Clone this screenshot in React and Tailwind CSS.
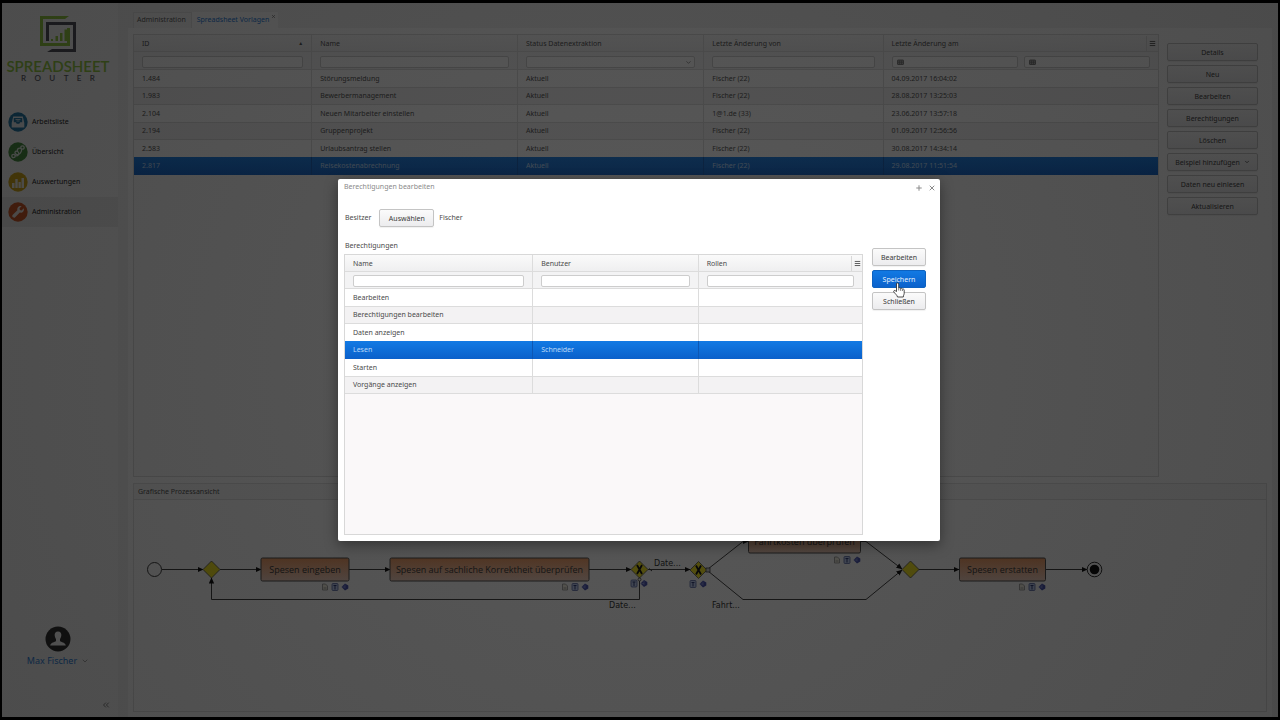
import { ChevronDown, ChevronsLeft, Menu, Plus, X } from "lucide-react";

const TEMPLATES = [
  ["1.484", "Störungsmeldung", "Aktuell", "Fischer (22)", "04.09.2017 16:04:02"],
  ["1.983", "Bewerbermanagement", "Aktuell", "Fischer (22)", "28.08.2017 13:25:03"],
  ["2.104", "Neuen Mitarbeiter einstellen", "Aktuell", "1@1.de (33)", "23.06.2017 13:57:18"],
  ["2.194", "Gruppenprojekt", "Aktuell", "Fischer (22)", "01.09.2017 12:56:56"],
  ["2.583", "Urlaubsantrag stellen", "Aktuell", "Fischer (22)", "30.08.2017 14:34:14"],
  ["2.817", "Reisekostenabrechnung", "Aktuell", "Fischer (22)", "29.08.2017 11:51:54"],
];

const PERMISSIONS = [
  ["Bearbeiten", "", ""],
  ["Berechtigungen bearbeiten", "", ""],
  ["Daten anzeigen", "", ""],
  ["Lesen", "Schneider", ""],
  ["Starten", "", ""],
  ["Vorgänge anzeigen", "", ""],
];

const ACTIONS = ["Details", "Neu", "Bearbeiten", "Berechtigungen", "Löschen", "Beispiel hinzufügen", "Daten neu einlesen", "Aktualisieren"];

const FIELD = "block h-[12px] w-full min-w-0 rounded-[2px] border border-[#cdcdcd] bg-white px-1 text-[7px]";
const BUTTON = "flex h-[18px] w-full items-center justify-center gap-1 rounded-[2px] border border-[#c4c4c4] bg-linear-to-b from-[#fbfbfb] to-[#ececee] text-[7px] leading-none text-[#3a3a3a] shadow-[0_1px_1px_rgba(0,0,0,0.06)]";
const HEAD = "border-b border-[#dcdcdc] bg-linear-to-b from-[#fafafa] to-[#efeff0] px-2 pt-px pb-0 text-left font-normal";
const FILTER = "border-b border-[#dcdcdc] bg-[#f3f3f4] px-2 pt-[2px] pb-0 font-normal";
const ROW_EVEN = "h-[18px] bg-[#f3f2f3]";
const ROW_ODD = "h-[17px] bg-white";
const ROW_SELECTED = "bg-linear-to-b from-[#127ae4] to-[#0b60ca] text-[#bcd9f8]";

function Row({ cells, index, selected }) {
  const size = index % 2 ? ROW_EVEN : ROW_ODD;
  const line = index % 2 && !selected ? "border-y border-y-[#dcdcdc]" : "";
  return (
    <tr aria-selected={selected} className={selected ? `${index % 2 ? "h-[18px]" : "h-[17px]"} ${ROW_SELECTED}` : size}>
      {cells.map((cell, i) => (
        <td key={i} className={`truncate px-2 py-0 ${line} ${i < cells.length - 1 ? (selected ? "border-r border-r-[#0d57b4]" : "border-r border-r-[#dcdcdc]") : ""}`}>
          {cell}
        </td>
      ))}
    </tr>
  );
}

function Logo() {
  return (
    <div className="flex flex-col items-center pt-[12px] pr-[4px]">
      <svg viewBox="0 0 38 38" className="size-[38px]" aria-label="Spreadsheet Router" role="img">
        <path fill="#8fc93a" d="M1 1h29l-4 3H4v24h24V13h3v18H1z" />
        <path fill="#4a4a55" d="M7 7h30v30H8l5-3h21V10H10v16H7z" />
        <path fill="#8fc93a" d="M12 24h2v2h-2zM16.500 21h2.500v5h-2.500zM21 18h2.500v8H21zM25.500 14.500H28V26h-2.500z" />
      </svg>
      <div className="mt-[5px] font-[Lato,sans-serif] text-[15px] leading-[16px] font-semibold text-[#8fc93a]">SPREADSHEET</div>
      <div className="flex w-[74px] justify-between font-[Lato,sans-serif] text-[8px] leading-[8px] font-semibold text-[#55555f]">
        {[..."ROUTER"].map((letter, i) => <span key={i}>{letter}</span>)}
      </div>
    </div>
  );
}

const NAV = [
  {
    label: "Arbeitsliste", color: "#1a73a3",
    icon: <><path d="M5.200 4.500h9.600l1.500 6.500v4.500H3.700V11z" fill="#e8eef2" /><path d="M5.800 6h8.400v4.300h-2l-.900 1.500H8.700l-.900-1.500h-2z" fill="#1a73a3" /><path d="M7.500 7.500h5M8.500 9h3" stroke="#e8eef2" strokeWidth="0.800" /></>,
  },
  {
    label: "Übersicht", color: "#3f8a38",
    icon: <g fill="none" stroke="#e6efe6" strokeWidth="1.300"><circle cx="5.500" cy="14" r="1.700" /><circle cx="14.500" cy="5.500" r="1.700" /><path d="M7 13.500c3 1 4.500-1 3.500-3s-4-1.500-3.500.500 4 2 5 .500 2-2 1.500-4.500M13 6.500C10.500 5.500 9 7 9.500 9" /></g>,
  },
  {
    label: "Auswertungen", color: "#d0a40e",
    icon: <path fill="#f2f0e6" d="M4 11h2.500v5H4zM7.300 7h2.400v9H7.300zM10.500 10h2.300v6h-2.300zM13.500 6H16v10h-2.500z" />,
  },
  {
    label: "Administration", color: "#cc4f1c", active: true,
    icon: <path fill="#f2ebe6" d="M15.800 6.200 13.600 8.400l-1.700-.400-.400-1.700 2.200-2.200c-2.800-.700-5 1.600-4.300 4.100l-4.600 4.600c-1.600 1.600.800 4 2.400 2.400l4.600-4.600c2.500.700 4.800-1.600 4-4.400z" />,
  },
];

function Sidebar() {
  return (
    <aside className="flex w-[116px] shrink-0 flex-col bg-[#f8f8f8]">
      <Logo />
      <nav className="mt-[25px] flex flex-col">
        {NAV.map(({ label, color, icon, active }) => (
          <a key={label} href={`#${label}`} aria-current={active ? "page" : undefined} className={`flex h-[30px] items-center gap-[4px] pl-[6px] text-[7px] text-[#111] ${active ? "bg-[#e9e9e9]" : ""}`}>
            <svg viewBox="0 0 20 20" className="size-[20px]" aria-hidden="true">
              <circle cx="10" cy="10" r="9.700" fill={color} />
              {icon}
            </svg>
            {label}
          </a>
        ))}
      </nav>
      <div className="mt-auto flex flex-col items-center pr-[4px] pb-[7px]">
        <svg viewBox="0 0 26 26" className="size-[26px]" aria-hidden="true">
          <circle cx="13" cy="13" r="12.500" fill="#262626" />
          <path fill="#fff" d="M13 5.500c2.500 0 3.600 1.700 3.300 4-.200 1.800-1 2.800-1.300 3.800v1.700c1 1.200 5.500 1.500 5.800 4.500H5.200c.300-3 4.800-3.300 5.800-4.500v-1.700c-.300-1-1.100-2-1.300-3.800-.300-2.300.800-4 3.300-4z" />
        </svg>
        <button type="button" className="mt-[3px] flex items-center gap-1 text-[9px] leading-[12px] text-[#1a78d8]">
          Max Fischer <ChevronDown className="size-[8px] text-[#777]" />
        </button>
        <button type="button" aria-label="Menü einklappen" className="mt-[33px] mr-[3px] self-end text-[#666]">
          <ChevronsLeft className="size-[10px]" />
        </button>
      </div>
    </aside>
  );
}

function DateField({ label }) {
  return (
    <div className="flex h-[12px] flex-1 items-center rounded-[2px] border border-[#cdcdcd] bg-white pl-1">
      <button type="button" aria-label={`${label} wählen`}>
        <svg viewBox="0 0 7 6" className="h-[6px] w-[7px]" aria-hidden="true">
          <rect x="0.500" y="1" width="6" height="4.500" rx="0.500" fill="#aaa" stroke="#666" strokeWidth="0.800" />
          <path d="M1 3.200h5M2.500 1.500v4M4.500 1.500v4" stroke="#666" strokeWidth="0.600" />
        </svg>
      </button>
      <input aria-label={label} className="h-full w-full min-w-0 px-1 text-[7px]" />
    </div>
  );
}

function TemplateTable() {
  return (
    <div className="min-w-0 flex-1 border border-[#dadada] bg-[#fafafa]">
      <table className="w-full table-fixed border-separate border-spacing-0 leading-[12px] text-[#4a4a4a]">
        <colgroup>
          <col className="w-[17.4%]" /><col className="w-[20.1%]" /><col className="w-[18.2%]" /><col className="w-[17.5%]" /><col />
        </colgroup>
        <thead>
          <tr className="h-[17px]">
            <th className={`${HEAD} border-r`}>
              <div className="flex items-center justify-between">ID <span className="text-[5px] leading-none">▲</span></div>
            </th>
            <th className={`${HEAD} border-r`}>Name</th>
            <th className={`${HEAD} border-r`}>Status Datenextraktion</th>
            <th className={`${HEAD} border-r`}>Letzte Änderung von</th>
            <th className={`${HEAD} pr-0`}>
              <div className="flex items-center justify-between">
                Letzte Änderung am
                <button type="button" aria-label="Spalten wählen" className="flex h-[15px] w-[12px] items-center justify-center border-l border-[#dcdcdc]"><Menu className="size-[7px]" strokeWidth={3} /></button>
              </div>
            </th>
          </tr>
          <tr className="h-[18px]">
            <th className={`${FILTER} border-r`}><input aria-label="Filter ID" className={FIELD} /></th>
            <th className={`${FILTER} border-r`}><input aria-label="Filter Name" className={FIELD} /></th>
            <th className={`${FILTER} border-r`}>
              <div className="relative">
                <select aria-label="Filter Status" className={`${FIELD} appearance-none`}><option></option></select>
                <ChevronDown className="pointer-events-none absolute top-[3px] right-[3px] size-[7px]" />
              </div>
            </th>
            <th className={`${FILTER} border-r`}><input aria-label="Filter Letzte Änderung von" className={FIELD} /></th>
            <th className={FILTER}><div className="flex gap-[6px]"><DateField label="Von" /><DateField label="Bis" /></div></th>
          </tr>
        </thead>
        <tbody>
          {TEMPLATES.map((cells, i) => <Row key={cells[0]} cells={cells} index={i} selected={i === 5} />)}
        </tbody>
      </table>
    </div>
  );
}

function Diamond({ x, y, exclusive }) {
  return (
    <g>
      <path d={`M${x - 8.5} ${y}L${x} ${y - 8.5}L${x + 8.5} ${y}L${x} ${y + 8.5}z`} fill="#f4e414" stroke="#444" strokeWidth="0.800" />
      {exclusive && <path d={`M${x - 2.5} ${y - 4.500}L${x + 2.5} ${y + 4.500}M${x + 2.5} ${y - 4.500}L${x - 2.5} ${y + 4.500}`} stroke="#000" strokeWidth="1.800" />}
    </g>
  );
}

function Badges({ x, y, page = true }) {
  return (
    <g>
      {page && <path d={`M${x - 22.5} ${y - 3}h3l2 2v4h-5zM${x - 21.5} ${y + 1}h3`} fill="#f4f0e0" stroke="#888" strokeWidth="0.800" />}
      <rect x={x - 13} y={y - 3.500} width="6" height="7" rx="1" fill="#b8c8f0" stroke="#4a5a9a" strokeWidth="0.800" />
      <path d={`M${x - 11.5} ${y - 1.500}h3M${x - 10} ${y - 1.500}v4`} stroke="#22306e" strokeWidth="1" />
      <path d={`M${x - 3.5} ${y}L${x} ${y - 3.500}L${x + 3.300} ${y - 1.500}V${y + 1.500}L${x} ${y + 3.500}z`} fill="#3b46a8" />
      <path d={`M${x - 3} ${y}h3M${x} ${y - 2.500}v4`} stroke="#a8b4f0" strokeWidth="0.500" />
    </g>
  );
}

function Task({ x, y, width, children }) {
  return (
    <g>
      <rect x={x} y={y} width={width} height="23" rx="1.500" fill="url(#task)" stroke="#444" />
      <text x={x + width / 2} y={y + 14.5} textAnchor="middle" fontSize="9" fill="#2c2c2c">{children}</text>
    </g>
  );
}

function ProcessDiagram() {
  return (
    <svg viewBox="134 500 1132 210" width="1132" height="210" className="max-w-none font-['Open_Sans',sans-serif]" role="img" aria-label="Prozess">
      <defs>
        <linearGradient id="task" x1="0" y1="0" x2="0" y2="1">
          <stop offset="0" stopColor="#f0965a" />
          <stop offset="1" stopColor="#f2cdbc" />
        </linearGradient>
        <marker id="arrow" viewBox="0 0 6 6" refX="5.500" refY="3" markerWidth="6" markerHeight="6" markerUnits="userSpaceOnUse" orient="auto">
          <path d="M0 0.300L6 3L0 5.700z" />
        </marker>
      </defs>
      <g fill="none" stroke="#333" strokeWidth="1" markerEnd="url(#arrow)">
        <path d="M162 569.500H203" /><path d="M220 569.500H261" /><path d="M349 569.500H390" /><path d="M589 569.500H631" />
        <path d="M648 569.500H690" /><path d="M918 569.500H959" /><path d="M1046 569.500H1087" />
        <path d="M639.500 578V599.500H211.500V578" />
        <path d="M708 569L743 541.500H748" /><path d="M860 541.500H866L902 569" /><path d="M708 571L743 599.500H866L902 570" />
      </g>
      <circle cx="154.500" cy="569.500" r="7" fill="#fff" stroke="#333" />
      <Diamond x={211.5} y={569.5} />
      <Diamond x={639.5} y={569.5} exclusive />
      <Diamond x={698.5} y={570} exclusive />
      <Diamond x={910.5} y={569.5} />
      <rect x="706" y="568" width="4" height="4" fill="#ccc" stroke="#333" strokeWidth="0.800" />
      <path d="M649 568.500l3 2.500" stroke="#222" />
      <Task x={261} y={558} width={88}>Spesen eingeben</Task>
      <Task x={390} y={558} width={199}>Spesen auf sachliche Korrektheit überprüfen</Task>
      <Task x={748.5} y={530} width={112}>Fahrtkosten überprüfen</Task>
      <Task x={959.5} y={558} width={86}>Spesen erstatten</Task>
      <Badges x={345} y={587} /><Badges x={585} y={587} /><Badges x={857} y={560} /><Badges x={1042} y={587} />
      <Badges x={644} y={583.5} page={false} /><Badges x={703} y={584} page={false} />
      <circle cx="639.500" cy="579.500" r="1.500" fill="#fff" stroke="#333" strokeWidth="0.800" />
      <circle cx="1094.500" cy="569.500" r="7.300" fill="#fff" stroke="#222" />
      <circle cx="1094.500" cy="569.500" r="4.800" fill="#000" />
      <g fontSize="8" fill="#222" fontFamily="DejaVu Sans">
        <text x="654" y="566">Date...</text><text x="609" y="608">Date...</text><text x="712" y="608">Fahrt...</text>
      </g>
    </svg>
  );
}

function Workspace() {
  return (
    <div className="flex min-w-0 flex-1 flex-col bg-[#f1f1f1] pr-[6px] pl-[10px]">
      <div role="tablist" className="flex h-[25px] items-end pl-[5px] text-[7px]">
        <button type="button" role="tab" aria-selected="false" className="flex h-[16px] items-center border border-b-0 border-[#e2e2e2] bg-[#f5f5f5] pr-[5px] pl-[3px] text-[#555]">Administration</button>
        <div className="flex h-[16px] items-center bg-[#fdfdfd]">
          <button type="button" role="tab" aria-selected="true" className="h-[16px] pl-[5px] text-[#1273d6]">Spreadsheet Vorlagen</button>
          <button type="button" aria-label="Tab schließen" className="self-start px-[2px] pt-[2px] text-[#666]"><X className="size-[5px]" strokeWidth={3} /></button>
        </div>
      </div>
      <div className="flex min-h-0 flex-1 flex-col gap-[6px] bg-[#fdfdfd] px-[5px] pt-[6px] pb-[5px]">
        <div className="flex min-h-0 flex-1 gap-2 pr-[9px]">
          <TemplateTable />
          <div className="flex w-[91px] shrink-0 flex-col gap-1 pt-[9px]">
            {ACTIONS.map((action) => (
              <button key={action} type="button" className={BUTTON}>
                {action}
                {action === "Beispiel hinzufügen" && <ChevronDown className="size-[6px]" strokeWidth={3} />}
              </button>
            ))}
          </div>
        </div>
        <section className="flex h-[229px] shrink-0 flex-col overflow-hidden border border-[#dfdfdf]">
          <h2 className="h-[16px] shrink-0 border-b border-[#dfdfdf] bg-[#f7f7f7] pl-1 leading-[15px] text-[#4a4a4a]">Grafische Prozessansicht</h2>
          <ProcessDiagram />
        </section>
      </div>
    </div>
  );
}

function HandCursor() {
  return (
    <svg viewBox="0 0 12 16" className="pointer-events-none absolute top-[12px] left-[21px] z-10 h-[16px] w-[12px]" aria-hidden="true">
      <path d="M3.500 9.500V2a1.100 1.100 0 0 1 2.200 0v4.200c.500-.700 1.700-.500 1.900.300.600-.500 1.600-.200 1.800.600.800-.400 1.800.100 1.800 1v3.200c0 1.200-.800 1.800-.900 3.700H4.500c-.200-1.700-2.500-3.400-3.700-5-.700-1.200.800-2 1.600-1.200z" fill="#fff" stroke="#222" strokeWidth="0.800" />
      <path d="M5.700 6.500v2M7.600 6.800v2M9.400 7.400v1.600" stroke="#222" strokeWidth="0.600" />
    </svg>
  );
}

function PermissionsDialog() {
  return (
    <div role="dialog" aria-labelledby="dialog-title" className="flex h-[362px] w-[602px] max-w-full flex-col rounded-[2px] bg-white text-[7px] text-[#4a4a4a] shadow-[0_4px_14px_rgba(0,0,0,0.4)]">
      <header className="flex h-[17px] items-center gap-[5px] pr-[4px] pl-[6px] text-[#8a8a8a]">
        <h1 id="dialog-title" className="mr-auto">Berechtigungen bearbeiten</h1>
        <button type="button" aria-label="Maximieren"><Plus className="size-[8px]" strokeWidth={3} /></button>
        <button type="button" aria-label="Fenster schließen"><X className="size-[8px]" strokeWidth={3} /></button>
      </header>
      <div className="flex items-center pt-[13px] pl-[7px]">
        <span>Besitzer</span>
        <div className="mr-[5px] ml-[8px] w-[55px]"><button type="button" className={BUTTON}>Auswählen</button></div>
        <span>Fischer</span>
      </div>
      <div className="flex min-h-0 flex-1 gap-[9px] pt-[13px] pr-[14px] pb-[6px] pl-[6px]">
        <div className="flex min-w-0 flex-1 flex-col">
          <h2 className="mb-[2px] pl-px leading-[12px]">Berechtigungen</h2>
          <div className="flex-1 border border-[#d8d8d8] bg-[#faf8f9]">
            <table className="w-full table-fixed border-separate border-spacing-0 leading-[12px]">
              <colgroup><col className="w-[36.4%]" /><col className="w-[32%]" /><col /></colgroup>
              <thead>
                <tr className="h-[17px]">
                  <th className={`${HEAD} border-r`}>Name</th>
                  <th className={`${HEAD} border-r`}>Benutzer</th>
                  <th className={`${HEAD} pr-0`}>
                    <div className="flex items-center justify-between">
                      Rollen
                      <button type="button" aria-label="Spalten wählen" className="flex h-[15px] w-[11px] items-center justify-center border-l border-[#d8d8d8]"><Menu className="size-[7px]" strokeWidth={3} /></button>
                    </div>
                  </th>
                </tr>
                <tr className="h-[17px]">
                  <th className={`${FILTER} border-r`}><input aria-label="Filter Name" className={FIELD} /></th>
                  <th className={`${FILTER} border-r`}><input aria-label="Filter Benutzer" className={FIELD} /></th>
                  <th className={FILTER}><input aria-label="Filter Rollen" className={FIELD} /></th>
                </tr>
              </thead>
              <tbody>
                {PERMISSIONS.map((cells, i) => <Row key={cells[0]} cells={cells} index={i} selected={i === 3} />)}
              </tbody>
            </table>
          </div>
        </div>
        <div className="flex w-[54px] shrink-0 flex-col gap-1 pt-[8px]">
          <button type="button" className={BUTTON}>Bearbeiten</button>
          <div className="relative">
            <button type="button" className="flex h-[18px] w-full items-center justify-center rounded-[2px] border border-[#0d62c0] bg-linear-to-b from-[#127ae4] to-[#0b62cc] text-[7px] leading-none text-[#e4f0fe]">Speichern</button>
            <HandCursor />
          </div>
          <button type="button" className={BUTTON}>Schließen</button>
        </div>
      </div>
    </div>
  );
}

export default function App() {
  return (
    <div className="h-screen min-h-[600px] w-full bg-black px-[2px] py-[3px] font-['Noto_Sans','Open_Sans',sans-serif] text-[7px]">
      <div className="relative flex h-full overflow-hidden">
        <Sidebar />
        <Workspace />
        <div className="absolute inset-0 grid place-items-center bg-[radial-gradient(circle,rgba(14,14,14,0.69),rgba(6,6,6,0.71))] pr-[2px]">
          <PermissionsDialog />
        </div>
      </div>
    </div>
  );
}
